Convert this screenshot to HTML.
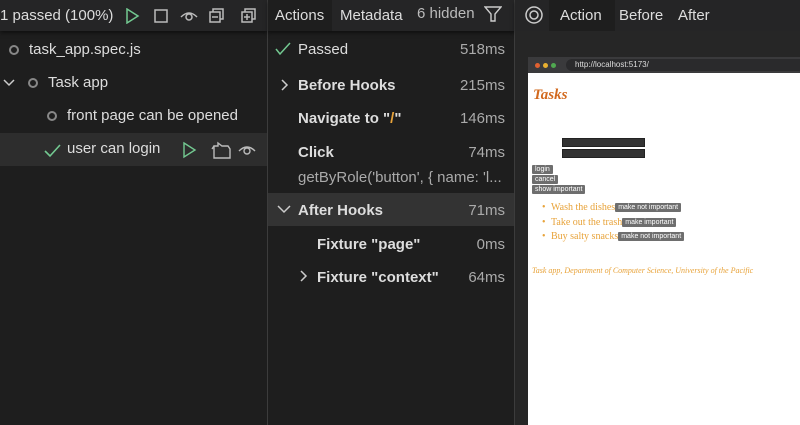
<!DOCTYPE html>
<html><head><style>
*{margin:0;padding:0;box-sizing:border-box}
body{width:800px;height:425px;background:#1e1e1e;font-family:"Liberation Sans","DejaVu Sans",sans-serif;color:#ccc;font-size:15px;position:relative;overflow:hidden}
.abs{position:absolute}
.hdr{top:0;height:31px;background:#252526;box-shadow:0 2px 4px rgba(0,0,0,.5)}
.sep{width:1px;background:#3c3c3c;top:0;height:425px}
.row{position:absolute;white-space:nowrap}
.ms{position:absolute;right:0;color:#aaa}
.b{font-weight:bold;color:#ddd}
.circ{position:absolute;width:10px;height:10px;border:2px solid #888;border-radius:50%}
.btn{display:inline-block;background:#6e6e6e;color:#fff;font:7px "Liberation Sans",sans-serif;padding:1px 3px;border-radius:1px;vertical-align:middle}
.li{position:absolute;left:551px;color:#e8a33a;font:10px "Liberation Serif",serif;white-space:nowrap}
.li:before{content:"•";position:absolute;left:-9px}
</style></head><body>
<!-- left -->
<div class="abs hdr" style="left:0;width:267px"></div>
<div class="row" style="left:0;top:7px;color:#ddd">1 passed (100%)</div>
<svg class="abs" style="left:124px;top:8px" width="140" height="16" fill="none" stroke-width="1.5">
<path d="M3 1 L14 8 L3 15 Z" stroke="#73c991"/>
<rect x="31" y="2" width="12" height="12" stroke="#bbb"/>
<path d="M57 9 q8 -8 16 0 M62 9 a3 3 0 1 0 6 0 a3 3 0 1 0 -6 0" stroke="#bbb"/>
<rect x="86" y="4" width="10" height="10" stroke="#bbb"/><path d="M89 4 V1 H99 V11 H96 M88 9 H94" stroke="#bbb"/>
<rect x="118" y="4" width="10" height="10" stroke="#bbb"/><path d="M121 4 V1 H131 V11 H128 M120 9 H126 M123 6 V12" stroke="#bbb"/>
</svg>
<div class="circ" style="left:9px;top:45px"></div>
<div class="row" style="left:29px;top:41px;color:#ddd">task_app.spec.js</div>
<svg class="abs" style="left:3px;top:77px" width="12" height="12"><path d="M1 3 L6 8 L11 3" stroke="#ccc" stroke-width="1.5" fill="none"/></svg>
<div class="circ" style="left:28px;top:78px"></div>
<div class="row" style="left:48px;top:74px;color:#ddd">Task app</div>
<div class="circ" style="left:47px;top:111px"></div>
<div class="row" style="left:67px;top:107px;color:#ddd">front page can be opened</div>
<div class="abs" style="left:0;top:133px;width:267px;height:33px;background:#2d2d2d"></div>
<svg class="abs" style="left:44px;top:143px" width="18" height="16"><path d="M1 8 L6 13 L16 2" stroke="#73c991" stroke-width="1.6" fill="none"/></svg>
<div class="row" style="left:67px;top:140px;color:#ddd">user can login</div>
<svg class="abs" style="left:182px;top:141px" width="80" height="18" fill="none" stroke="#bbb" stroke-width="1.4">
<path d="M2 2 L13 9 L2 16 Z" stroke="#73c991"/>
<path d="M32 5 H36 V2 L40 5 H46 L48 8 V17 H32 Z M32 5 L30 8"/>
<path d="M57 10 q8 -8 16 0 M62 10 a3 3 0 1 0 6 0 a3 3 0 1 0 -6 0"/>
</svg>
<div class="abs sep" style="left:267px"></div>
<!-- middle -->
<div class="abs hdr" style="left:268px;width:247px"></div>
<div class="abs" style="left:268px;top:0;width:64px;height:31px;background:#1e1e1e"></div>
<div class="row" style="left:275px;top:7px;color:#ddd">Actions</div>
<div class="row" style="left:340px;top:7px;color:#ddd">Metadata</div>
<div class="row" style="left:417px;top:5px;color:#bbb">6 hidden</div>
<svg class="abs" style="left:484px;top:6px" width="18" height="16"><path d="M1 1 H17 L11 8 V15 H7 V8 Z" stroke="#ccc" stroke-width="1.4" fill="none"/></svg>
<svg class="abs" style="left:275px;top:42px" width="16" height="14"><path d="M1 7 L5 12 L15 1" stroke="#73c991" stroke-width="1.5" fill="none"/></svg>
<div class="row" style="left:298px;top:41px;color:#ddd">Passed</div>
<div class="ms" style="right:295px;top:41px">518ms</div>
<svg class="abs" style="left:280px;top:79px" width="10" height="12"><path d="M2 1 L7 6 L2 11" stroke="#ccc" stroke-width="1.5" fill="none"/></svg>
<div class="row b" style="left:298px;top:77px">Before Hooks</div>
<div class="ms" style="right:295px;top:77px">215ms</div>
<div class="row b" style="left:298px;top:110px">Navigate to "<span style="color:#e8a33a">/</span>"</div>
<div class="ms" style="right:295px;top:110px">146ms</div>
<div class="row b" style="left:298px;top:144px">Click</div>
<div class="ms" style="right:295px;top:144px">74ms</div>
<div class="row" style="left:298px;top:169px;color:#aaa">getByRole('button', { name: 'l...</div>
<div class="abs" style="left:268px;top:193px;width:246px;height:33px;background:#333"></div>
<svg class="abs" style="left:277px;top:204px" width="14" height="10"><path d="M1 2 L7 8 L13 2" stroke="#ccc" stroke-width="1.5" fill="none"/></svg>
<div class="row b" style="left:298px;top:202px">After Hooks</div>
<div class="ms" style="right:295px;top:202px">71ms</div>
<div class="row b" style="left:317px;top:236px">Fixture "page"</div>
<div class="ms" style="right:295px;top:236px">0ms</div>
<svg class="abs" style="left:299px;top:270px" width="10" height="12"><path d="M2 1 L7 6 L2 11" stroke="#ccc" stroke-width="1.5" fill="none"/></svg>
<div class="row b" style="left:317px;top:269px">Fixture "context"</div>
<div class="ms" style="right:295px;top:269px">64ms</div>
<div class="abs sep" style="left:514px"></div>
<!-- right -->
<div class="abs hdr" style="left:515px;width:285px"></div>
<div class="abs" style="left:515px;top:31px;width:285px;height:394px;background:#262626"></div>
<svg class="abs" style="left:524px;top:5px" width="20" height="20" fill="none" stroke="#ccc" stroke-width="1.5"><circle cx="10" cy="10" r="8"/><circle cx="10" cy="10" r="4"/></svg>
<div class="abs" style="left:549px;top:0;width:66px;height:31px;background:#1e1e1e"></div>
<div class="row" style="left:560px;top:7px;color:#ddd">Action</div>
<div class="row" style="left:619px;top:7px;color:#ddd">Before</div>
<div class="row" style="left:678px;top:7px;color:#ddd">After</div>
<div class="abs" style="left:528px;top:57px;width:272px;height:368px;background:#fff"></div>
<div class="abs" style="left:528px;top:57px;width:272px;height:16px;background:#3a3a3c"></div>
<div class="abs" style="left:535px;top:63px;width:5px;height:5px;border-radius:50%;background:#e06030"></div>
<div class="abs" style="left:543px;top:63px;width:5px;height:5px;border-radius:50%;background:#e8b030"></div>
<div class="abs" style="left:551px;top:63px;width:5px;height:5px;border-radius:50%;background:#50a850"></div>
<div class="abs" style="left:566px;top:59px;width:240px;height:12px;border-radius:6px;background:#2a2a2c"></div>
<div class="row" style="left:575px;top:60px;font-size:8px;color:#ddd">http://localhost:5173/</div>
<div class="row" style="left:533px;top:87px;font:italic bold 15px 'Liberation Serif',serif;color:#d2691e">Tasks</div>
<div class="abs" style="left:562px;top:138px;width:83px;height:9px;background:#333;border:1px solid #222"></div>
<div class="abs" style="left:562px;top:149px;width:83px;height:9px;background:#333;border:1px solid #222"></div>
<div class="abs" style="left:532px;top:160px"><span class="btn">login</span></div>
<div class="abs" style="left:532px;top:170px"><span class="btn">cancel</span></div>
<div class="abs" style="left:532px;top:180px"><span class="btn">show important</span></div>
<div class="li" style="top:202px">Wash the dishes<span class="btn">make not important</span></div>
<div class="li" style="top:217px">Take out the trash<span class="btn">make important</span></div>
<div class="li" style="top:231px">Buy salty snacks<span class="btn">make not important</span></div>
<div class="row" style="left:532px;top:266px;font:italic 8px 'Liberation Serif',serif;color:#e8a33a">Task app, Department of Computer Science, University of the Pacific</div>
</body></html>
